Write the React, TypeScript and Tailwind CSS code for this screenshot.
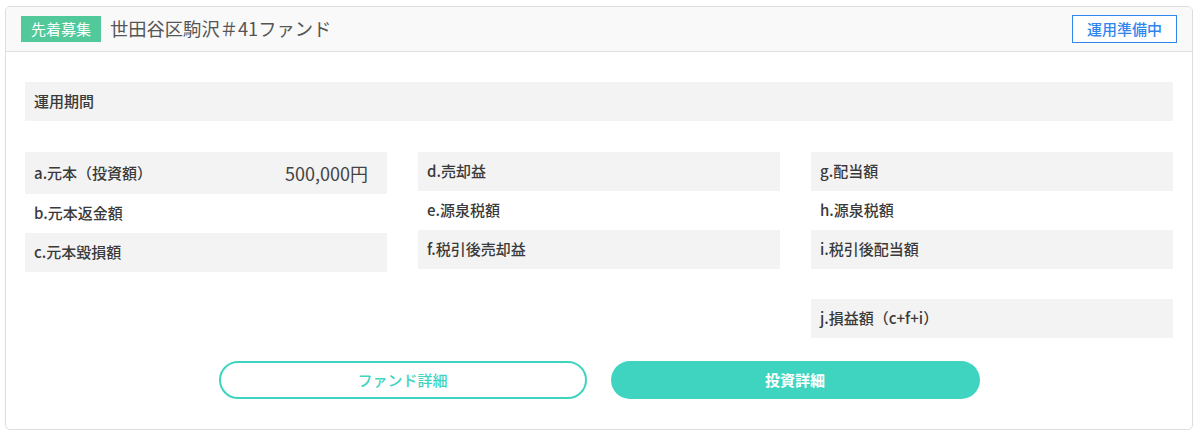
import React from "react";

const font = { fontFamily: '"Noto Sans CJK JP", "Noto Sans", sans-serif' };

function Row({ label, value, shade, tall }: { label: string; value?: string; shade: boolean; tall?: boolean }) {
  return (
    <div
      className={`flex items-center justify-between pl-[9px] pr-[19px] ${tall ? "h-[42px]" : "h-[39px]"} ${shade ? "bg-[#f3f3f3]" : "bg-white"}`}
    >
      <span className="text-[15px] font-medium text-[#3a3a3a]">{label}</span>
      {value && <span className="text-[18px] text-[#444]">{value}</span>}
    </div>
  );
}

export default function App() {
  return (
    <div className="pt-[6px] pl-[5px] bg-white" style={font}>
      <div className="w-[1188px] h-[424px] border border-[#dedede] rounded-[5px] overflow-hidden flex flex-col">
        <div className="h-[45px] bg-[#f9f9f9] border-b border-[#dedede] flex items-center justify-between pl-[15px] pr-[15px]">
          <div className="flex items-center">
            <span className="w-[80px] h-[26px] bg-[#52c99a] text-white text-[15px] flex items-center justify-center">先着募集</span>
            <span className="ml-[9px] text-[18.3px] text-[#555]">世田谷区駒沢＃41ファンド</span>
          </div>
          <span className="w-[105px] h-[28px] bg-white border border-[#2f86ee] text-[#2f86ee] text-[15px] font-medium flex items-center justify-center">
            運用準備中
          </span>
        </div>
        <div className="px-[19px] pt-[30px] flex flex-col">
          <div className="h-[39px] bg-[#f3f3f3] flex items-center pl-[9px] text-[15px] font-medium text-[#3a3a3a]">運用期間</div>
          <div className="grid grid-cols-3 gap-x-[31px] mt-[31px] items-start">
            <div className="flex flex-col">
              <Row label="a.元本（投資額）" value="500,000円" shade tall />
              <Row label="b.元本返金額" shade={false} />
              <Row label="c.元本毀損額" shade />
            </div>
            <div className="flex flex-col">
              <Row label="d.売却益" shade />
              <Row label="e.源泉税額" shade={false} />
              <Row label="f.税引後売却益" shade />
            </div>
            <div className="flex flex-col">
              <Row label="g.配当額" shade />
              <Row label="h.源泉税額" shade={false} />
              <Row label="i.税引後配当額" shade />
              <div className="h-[30px]" />
              <Row label="j.損益額（c+f+i）" shade />
            </div>
          </div>
          <div className="flex justify-center gap-[24px] mt-[23px]">
            <button className="w-[368px] h-[38px] rounded-full border-2 border-[#3fd4c0] bg-white text-[#3fd4c0] text-[15px] font-medium">
              ファンド詳細
            </button>
            <button className="w-[369px] h-[38px] rounded-full bg-[#3fd4c0] text-white text-[15px] font-bold">
              投資詳細
            </button>
          </div>
        </div>
      </div>
    </div>
  );
}
